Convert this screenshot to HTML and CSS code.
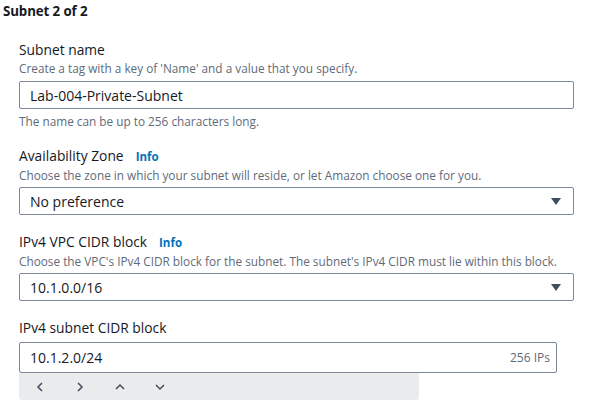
FILE: index.html
```html
<!DOCTYPE html>
<html>
<head>
<meta charset="utf-8">
<link rel="stylesheet" href="styles.css">
</head>
<body>
<div class="page">
  <h2 class="title">Subnet 2 of 2</h2>
  <div class="fields">
    <div class="field">
      <div class="label">Subnet name</div>
      <div class="desc">Create a tag with a key of 'Name' and a value that you specify.</div>
      <div class="input">Lab-004-Private-Subnet</div>
      <div class="hint">The name can be up to 256 characters long.</div>
    </div>
    <div class="field">
      <div class="label">Availability Zone <span class="info">Info</span></div>
      <div class="desc">Choose the zone in which your subnet will reside, or let Amazon choose one for you.</div>
      <div class="input select"><span>No preference</span><span class="caret"></span></div>
    </div>
    <div class="field">
      <div class="label">IPv4 VPC CIDR block <span class="info">Info</span></div>
      <div class="desc">Choose the VPC's IPv4 CIDR block for the subnet. The subnet's IPv4 CIDR must lie within this block.</div>
      <div class="input select"><span>10.1.0.0/16</span><span class="caret"></span></div>
    </div>
    <div class="field">
      <div class="label">IPv4 subnet CIDR block</div>
      <div class="input cidr"><span>10.1.2.0/24</span><span class="count">256 IPs</span></div>
      <div class="nav">
        <svg width="12" height="12" viewBox="0 0 12 12"><path d="M8 2 L4 6 L8 10" fill="none" stroke="#414d5c" stroke-width="1.5"/></svg>
        <svg width="12" height="12" viewBox="0 0 12 12"><path d="M4 2 L8 6 L4 10" fill="none" stroke="#414d5c" stroke-width="1.5"/></svg>
        <svg width="12" height="12" viewBox="0 0 12 12"><path d="M2 8 L6 4 L10 8" fill="none" stroke="#414d5c" stroke-width="1.5"/></svg>
        <svg width="12" height="12" viewBox="0 0 12 12"><path d="M2 4 L6 8 L10 4" fill="none" stroke="#414d5c" stroke-width="1.5"/></svg>
      </div>
    </div>
  </div>
</div>
</body>
</html>
```
FILE: styles.css
```css
html, body {
  margin: 0;
  padding: 0;
  background: #ffffff;
}
body {
  font-family: "Open Sans", "Noto Sans", sans-serif;
  color: #16191f;
}
.page {
  padding: 1px 0 0 3px;
}
.title {
  margin: 0;
  font-size: 13.3px;
  font-weight: 700;
  line-height: 20px;
  letter-spacing: -0.1px;
}
.fields {
  display: flex;
  flex-direction: column;
  gap: 17px;
  padding: 19px 0 0 16px;
  width: 555px;
}
.field {
  display: flex;
  flex-direction: column;
}
.label {
  font-size: 13.8px;
  line-height: 20px;
  display: flex;
  align-items: baseline;
  gap: 12px;
}
.info {
  color: #0073bb;
  font-weight: 700;
  font-size: 11.5px;
}
.desc, .hint {
  font-size: 11.8px;
  line-height: 16px;
  color: #5f6b7a;
}
.desc {
  margin-bottom: 4px;
}
.field:first-child .desc {
  margin-bottom: 5px;
}
.hint {
  margin-top: 4px;
}
.input {
  box-sizing: border-box;
  height: 28px;
  border: 1px solid #7d8998;
  border-radius: 2px;
  padding: 0 10px;
  font-size: 14px;
  display: flex;
  align-items: center;
  justify-content: space-between;
}
.select {
  padding-right: 12px;
}
.caret {
  width: 0;
  height: 0;
  border-left: 5px solid transparent;
  border-right: 5px solid transparent;
  border-top: 7px solid #414d5c;
}
.cidr {
  width: 538px;
  height: 31px;
  margin-top: 4px;
  padding-right: 6px;
}
.count {
  font-size: 12px;
  color: #5f6b7a;
}
.nav {
  width: 400px;
  height: 27px;
  background: #e9ebed;
  border-radius: 0 0 3px 3px;
  display: flex;
  align-items: center;
  gap: 28px;
  padding-left: 15px;
  box-sizing: border-box;
}
```
